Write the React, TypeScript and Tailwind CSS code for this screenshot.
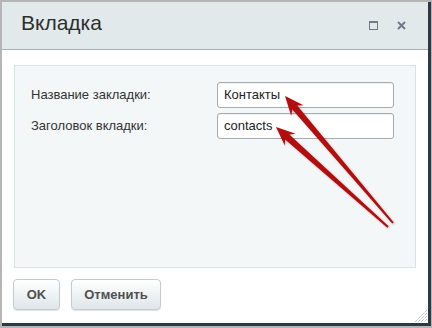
import React from "react";

type Pt = [number, number];

// arrow polygon from tail to tip, widening toward the head
function arrowPoints(tip: Pt, tail: Pt): string {
  const dx = tail[0] - tip[0];
  const dy = tail[1] - tip[1];
  const len = Math.sqrt(dx * dx + dy * dy);
  const ux = dx / len;
  const uy = dy / len;
  const nx = -uy;
  const ny = ux;
  const at = (d: number, w: number): Pt => [
    tip[0] + ux * d + nx * w,
    tip[1] + uy * d + ny * w,
  ];
  const pts: Pt[] = [
    tip,
    at(19, 8),
    at(15, 3.2),
    [tail[0] + nx * 1, tail[1] + ny * 1],
    [tail[0] - nx * 1, tail[1] - ny * 1],
    at(15, -3.2),
    at(19, -8),
  ];
  return pts.map((p) => `${p[0].toFixed(1)},${p[1].toFixed(1)}`).join(" ");
}

function Field({ label, value }: { label: string; value: string }) {
  return (
    <div className="flex items-center h-[26px]">
      <div className="w-[186px] text-[13px] text-[#333]">{label}</div>
      <div className="w-[177px] h-[26px] border border-[#a4acb1] rounded-[3px] bg-white flex items-center pl-[6px] text-[13px] text-[#222] shadow-[inset_0_1px_1px_rgba(0,0,0,0.06)]">
        {value}
      </div>
    </div>
  );
}

export default function App() {
  return (
    <div
      className="relative w-[432px] h-[328px] bg-[#b5b5b5] pt-[2px] pl-[2px]"
      style={{ fontFamily: '"Liberation Sans", Arial, sans-serif' }}
    >
      <div className="relative w-[429px] h-[324px] border-r-[3px] border-b-[3px] border-[#2e3a43] bg-white flex flex-col">
        {/* header */}
        <div className="h-[48px] shrink-0 bg-[#e2e9eb] border-b border-[#a9afb2] flex items-start pt-[9px] pl-[19px] pr-[22px]">
          <div className="text-[21px] leading-[24px] text-[#2e2e2e]">Вкладка</div>
          <div className="ml-auto flex items-center gap-[19px] mt-[10px]">
            <div className="w-[9px] h-[9px] border border-t-2 border-[#6e7d88]" />
            <svg width="9" height="9" viewBox="0 0 9 9">
              <path d="M1 1 L8 8 M8 1 L1 8" stroke="#6e7d88" strokeWidth="2" />
            </svg>
          </div>
        </div>

        {/* body */}
        <div className="px-[12px] pt-[15px]">
          <div className="h-[203px] border border-[#d8e3e6] bg-[#f4f7f8] pt-[16px] pl-[16px] flex flex-col gap-[5px]">
            <Field label="Название закладки:" value="Контакты" />
            <Field label="Заголовок вкладки:" value="contacts" />
          </div>
        </div>

        {/* buttons */}
        <div className="flex gap-[11px] pl-[11px] mt-[11px]">
          <button className="w-[47px] h-[31px] rounded-[4px] border border-[#c3cbcf] bg-gradient-to-b from-white to-[#dfe6e9] text-[13px] font-bold text-[#505050] shadow-[0_1px_1px_rgba(0,0,0,0.12)]">
            OK
          </button>
          <button className="w-[90px] h-[31px] rounded-[4px] border border-[#c3cbcf] bg-gradient-to-b from-white to-[#dfe6e9] text-[13px] font-bold text-[#505050] shadow-[0_1px_1px_rgba(0,0,0,0.12)]">
            Отменить
          </button>
        </div>

        {/* resize grip */}
        <svg
          className="absolute right-[1px] bottom-[1px]"
          width="12"
          height="12"
          viewBox="0 0 12 12"
        >
          <path
            d="M12 0 L0 12 M12 3 L3 12 M12 6 L6 12 M12 9 L9 12"
            stroke="#9aa2a7"
            strokeWidth="1"
            strokeDasharray="1 1"
          />
        </svg>
      </div>

      {/* annotation arrows */}
      <svg
        className="absolute left-0 top-0 pointer-events-none"
        width="432"
        height="328"
        viewBox="0 0 432 328"
      >
        <g style={{ filter: "drop-shadow(1px 1px 1px rgba(0,0,0,0.25))" }}>
          <polygon points={arrowPoints([285, 96], [393, 223])} fill="#b30d0d" />
          <polygon points={arrowPoints([276, 127], [388, 227])} fill="#b30d0d" />
        </g>
      </svg>
    </div>
  );
}
